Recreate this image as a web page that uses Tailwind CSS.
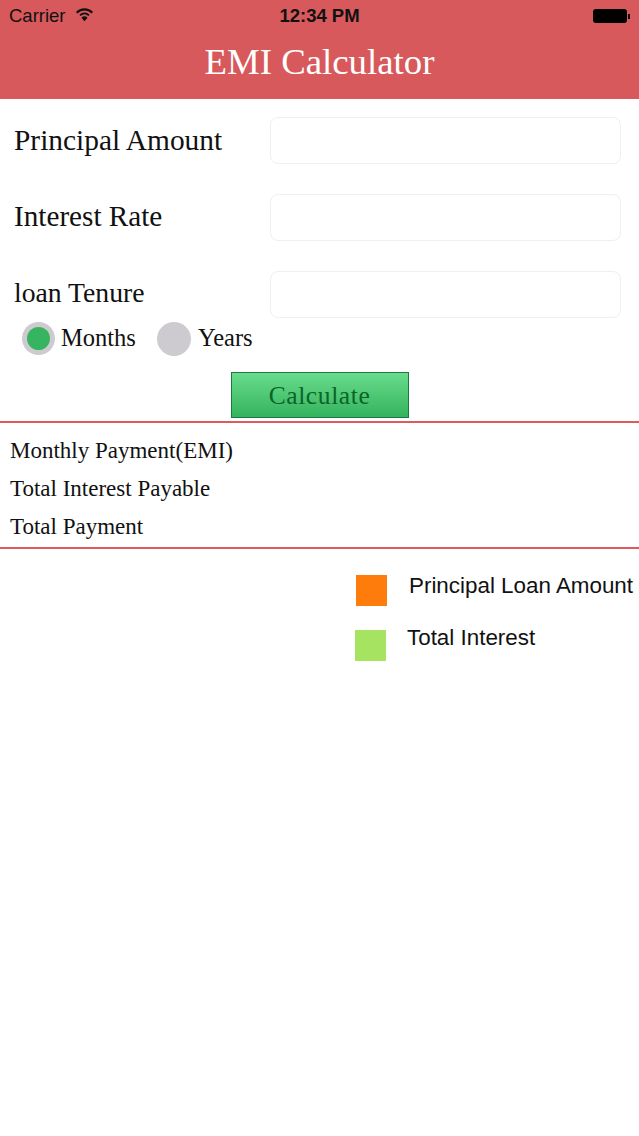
<!DOCTYPE html>
<html lang="en">
<head>
  <meta charset="UTF-8">
  <meta name="viewport" content="width=device-width, initial-scale=1.0">
  <title>EMI Calculator</title>
  <script src="https://cdn.jsdelivr.net/npm/@tailwindcss/browser@4"></script>
</head>
<body class="bg-white font-['Liberation_Serif',serif] text-[#111]">
  <div class="w-[639px] h-[1136px] overflow-hidden">

    <!-- Header -->
    <div class="h-[99px] bg-[#d7595c]">
      <div class="h-[32px] flex items-center justify-between pl-[9px] pr-[9px] font-['Liberation_Sans',sans-serif] text-[#111]">
        <div class="flex items-center gap-[9px] w-[110px]">
          <span class="text-[18.5px]">Carrier</span>
          <svg class="w-[19px] h-[15px] mb-[3px]" viewBox="0 0 20 15" fill="#111">
            <path d="M10 14.5 L6.8 10.8 A4.8 4.8 0 0 1 13.2 10.8 Z"/>
            <path d="M10 5.4 A8 8 0 0 0 4.6 7.7 L5.9 9.1 A6.2 6.2 0 0 1 14.1 9.1 L15.4 7.7 A8 8 0 0 0 10 5.4 Z"/>
            <path d="M10 1 A13 13 0 0 0 1 4.8 L2.6 6.4 A10.6 10.6 0 0 1 17.4 6.4 L19 4.8 A13 13 0 0 0 10 1 Z"/>
          </svg>
        </div>
        <span class="text-[18.5px] font-bold">12:34 PM</span>
        <div class="w-[110px] flex justify-end items-center">
          <div class="w-[34px] h-[14px] bg-black rounded-[3px]"></div>
          <div class="w-[2px] h-[5px] bg-black ml-[1px]"></div>
        </div>
      </div>
      <h1 class="text-center text-white text-[36.8px] leading-[60px]">EMI Calculator</h1>
    </div>

    <!-- Form -->
    <div class="pl-[14px] pr-[18px] pt-[18px]">
      <div class="flex items-center justify-between h-[47px] mb-[30px]">
        <label class="text-[29.4px]">Principal Amount</label>
        <input class="w-[351px] h-[47px] border border-[#f0eef2] rounded-[8px] bg-white">
      </div>
      <div class="flex items-center justify-between h-[47px] mb-[30px]">
        <label class="text-[29.2px] mb-[2px]">Interest Rate</label>
        <input class="w-[351px] h-[47px] border border-[#f0eef2] rounded-[8px] bg-white">
      </div>
      <div class="flex items-center justify-between h-[47px]">
        <label class="text-[27.7px] mb-[4px]">loan Tenure</label>
        <input class="w-[351px] h-[47px] border border-[#f0eef2] rounded-[8px] bg-white">
      </div>
    </div>

    <!-- Radios -->
    <div class="flex items-center pl-[22px] mt-[3px] text-[24.5px] h-[35px]">
      <div class="w-[33px] h-[33px] rounded-full bg-[#cdcbd0] flex items-center justify-center">
        <div class="w-[23px] h-[23px] rounded-full bg-[#37b45f]"></div>
      </div>
      <span class="ml-[6px]">Months</span>
      <div class="w-[34px] h-[34px] rounded-full bg-[#cdcbd0] ml-[21px]"></div>
      <span class="ml-[7px]">Years</span>
    </div>

    <!-- Calculate -->
    <div class="flex justify-center mt-[16px]">
      <button class="w-[178px] h-[46px] pt-[2px] border border-[#1a7a40] bg-gradient-to-b from-[#68dc8c] to-[#33b35e] text-[#0a6428] text-[25.5px] tracking-[0.6px]">Calculate</button>
    </div>

    <!-- Results -->
    <div class="mt-[3px] h-[128px] border-t-2 border-b-2 border-[#dd5a5d] pl-[10px] text-[23px]">
      <div class="h-[38px] mt-[9px] flex items-center">Monthly Payment(EMI)</div>
      <div class="h-[38px] flex items-center">Total Interest Payable</div>
      <div class="h-[38px] flex items-center">Total Payment</div>
    </div>

    <!-- Legend -->
    <div class="pt-[26px] font-['Liberation_Sans',sans-serif] text-[22.4px]">
      <div class="flex items-start pl-[356px] h-[55px]">
        <div class="w-[31px] h-[31px] bg-[#fd7c0c]"></div>
        <span class="ml-[22px] leading-[22px] whitespace-nowrap">Principal Loan Amount</span>
      </div>
      <div class="flex items-start pl-[355px]">
        <div class="w-[31px] h-[31px] bg-[#a5e361]"></div>
        <span class="ml-[21px] leading-[22px] mt-[-3px] whitespace-nowrap">Total Interest</span>
      </div>
    </div>

  </div>
</body>
</html>
